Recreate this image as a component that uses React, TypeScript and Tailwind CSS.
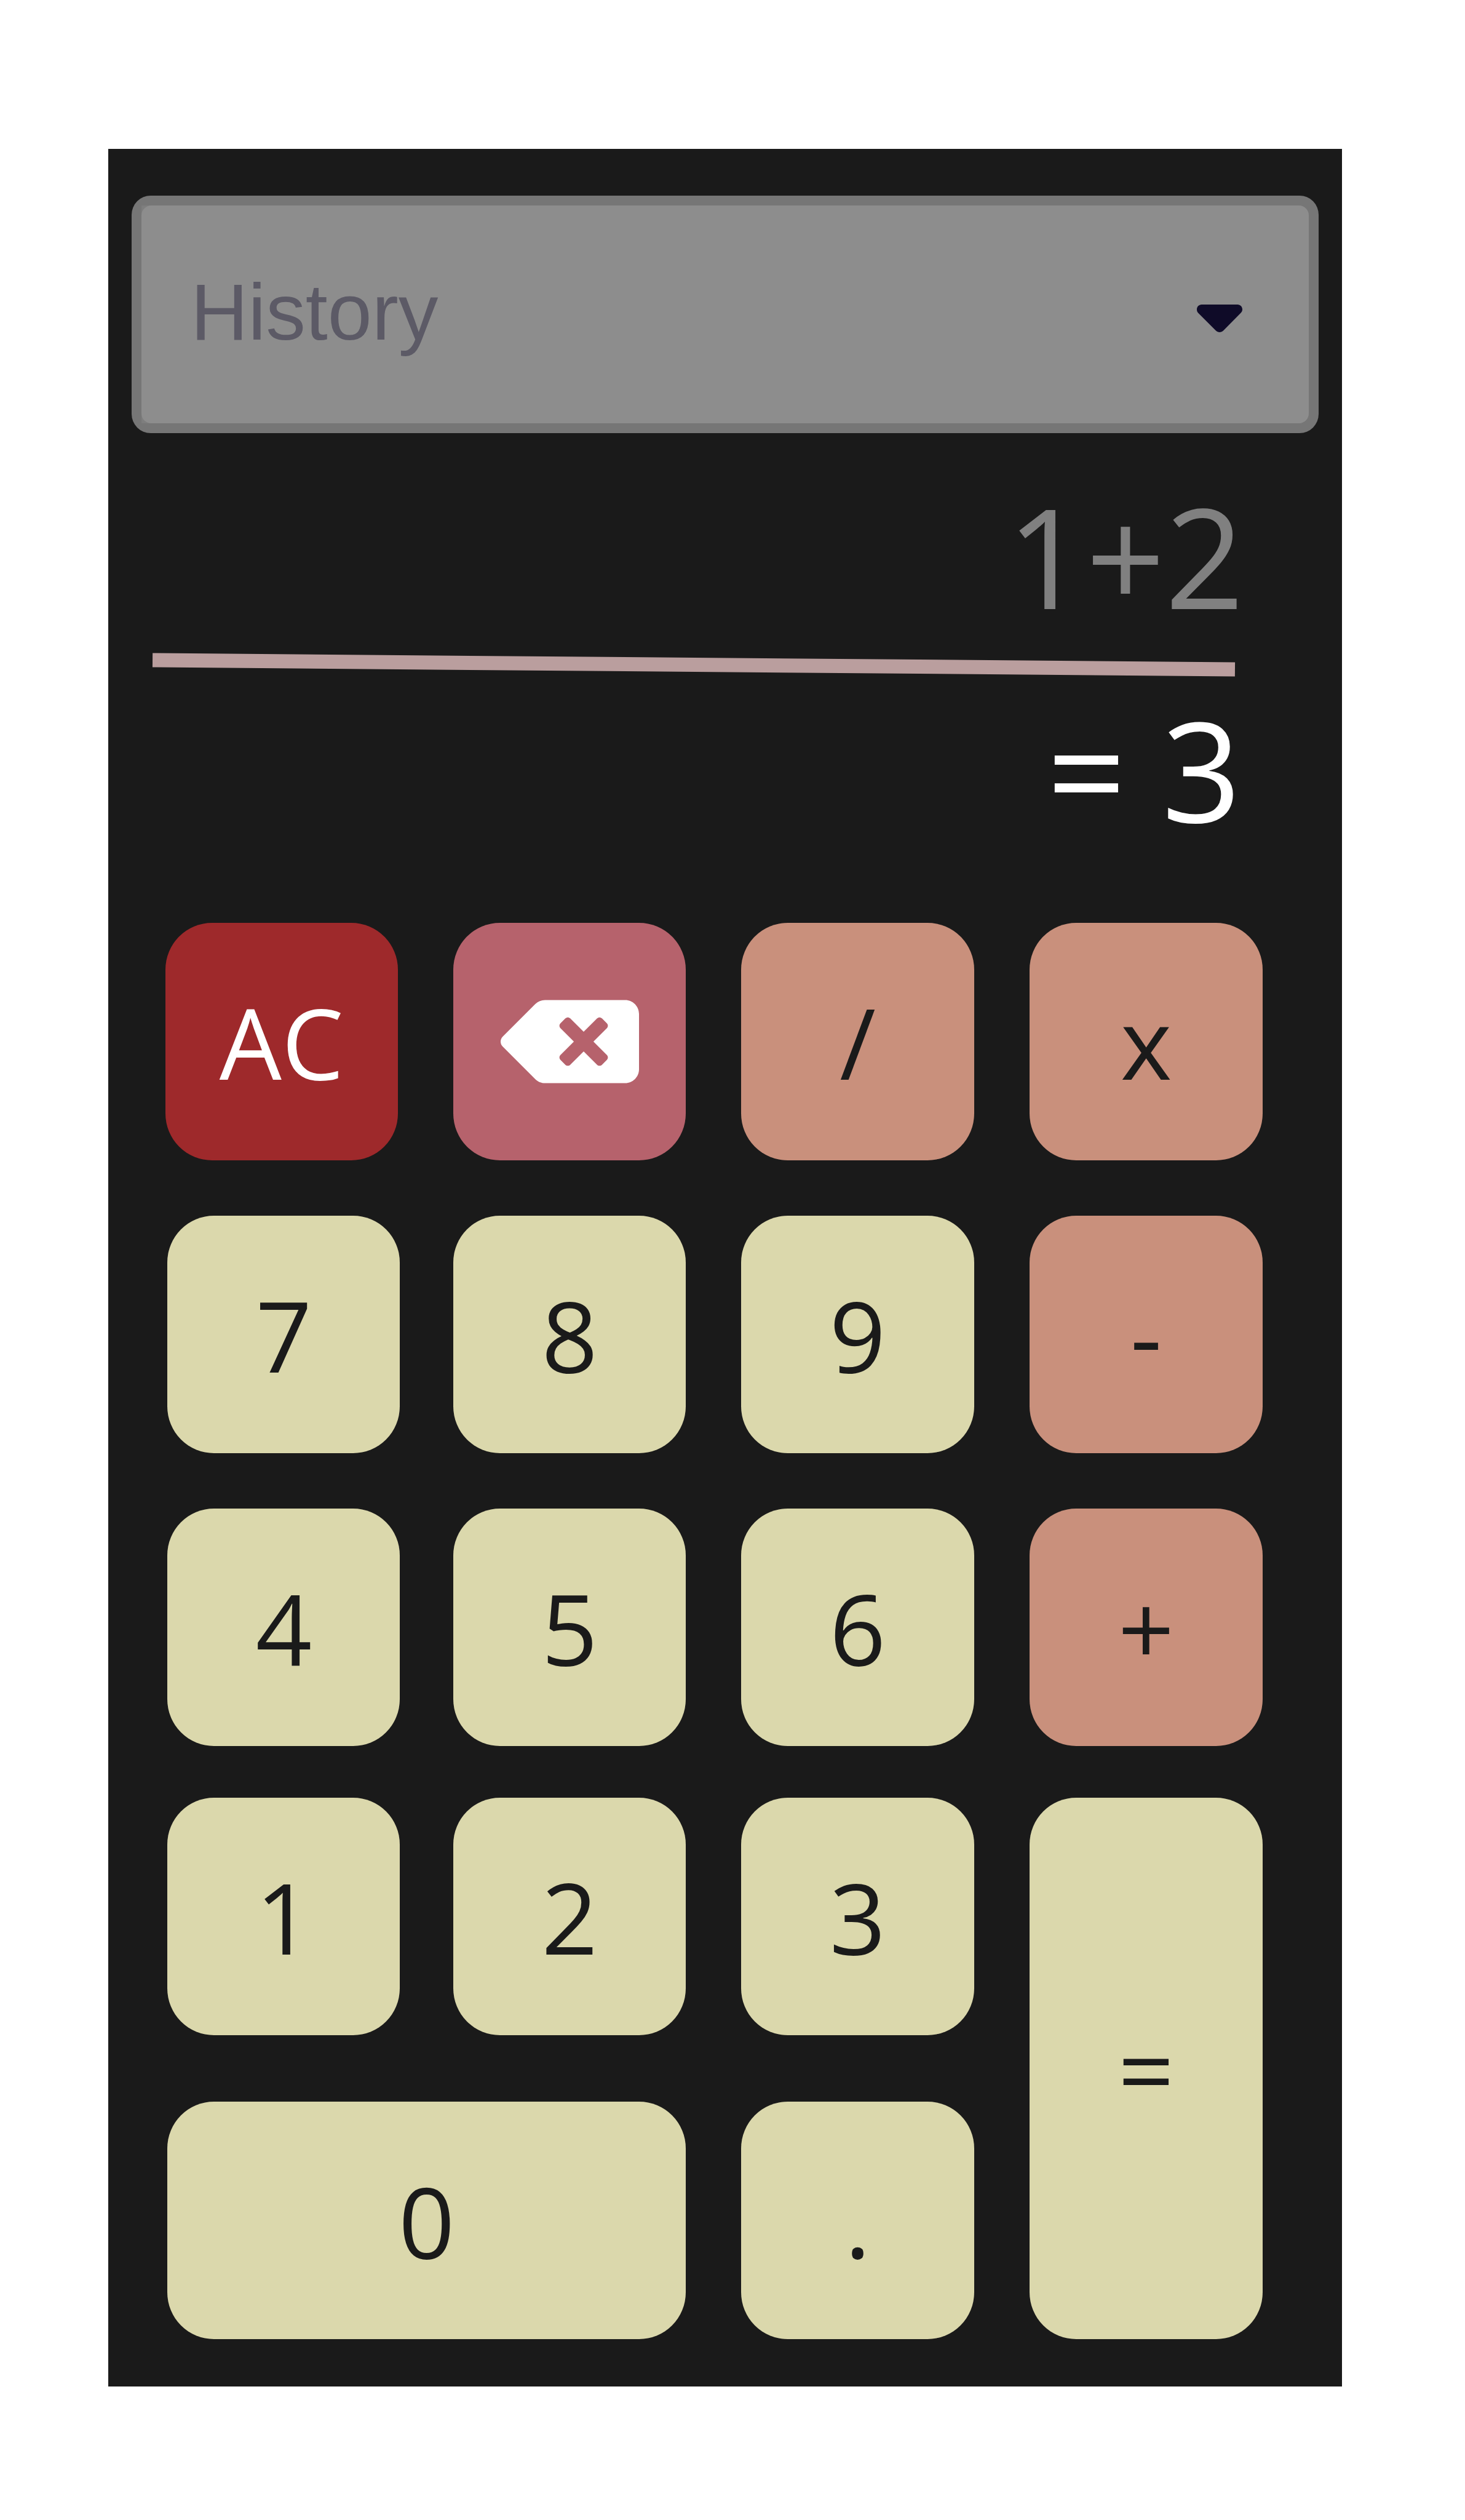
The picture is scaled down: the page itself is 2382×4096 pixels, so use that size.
import { FaBackspace } from "react-icons/fa";
import type { ReactNode } from "react";

const tones = {
  red: "bg-[#9e292b] text-white",
  rose: "bg-[#b6626c] text-white",
  clay: "bg-[#c9907c] text-[#1a1a1a]",
  cream: "bg-[#dbd8ac] text-[#1a1a1a]",
};

type KeyProps = {
  tone?: keyof typeof tones;
  size?: string;
  label?: string;
  children: ReactNode;
};

function Key({ tone = "cream", size = "w-[378.2px] h-[386px]", label, children }: KeyProps) {
  return (
    <button
      type="button"
      aria-label={label}
      className={`flex items-center justify-center rounded-[76px] text-[160px] leading-[218px] whitespace-nowrap ${size} ${tones[tone]}`}
    >
      {children}
    </button>
  );
}

function HistorySelect() {
  return (
    <div className="ml-[38px] h-[386px] w-[1930px] rounded-[31px] bg-[#767676] p-4">
      <div className="h-full rounded-r-[16px] bg-[#7e7e7e]">
        <div className="flex h-full items-center justify-between rounded-[16px] bg-[#8d8d8d] pr-[108px] pl-[80px]">
          <span className="mb-[9px] font-['Liberation_Sans',Arial,sans-serif] text-[129.4px] leading-[150px] text-[#5c5a66]">
            History
          </span>
          <svg viewBox="0 0 94.7 57.5" className="mt-[13px] h-[45px] w-[74px] fill-[#0f0b28]">
            <path d="M10 0H84.7C90.4 0 94.7 4.7 94.7 10.2C94.7 13 93.6 15.3 91.6 17.3L55 54.5C50.8 58.5 43.9 58.5 39.7 54.5L2.6 17.3C.8 15.3 0 13 0 10.2C0 4.7 4.3 0 10 0Z" />
          </svg>
        </div>
      </div>
    </div>
  );
}

export default function App() {
  return (
    <div className="h-[4096px] w-[2382px] overflow-hidden bg-white pt-[242px] pl-[176px] font-['Open_Sans','Noto_Sans',sans-serif]">
      <main className="flex h-[3637px] w-[2006px] flex-col bg-[#1a1a1a] pt-[76px]">
        <HistorySelect />

        <section className="mt-[46px] flex flex-col">
          <div className="h-[306px] pr-[159px] text-right text-[225px] leading-[306px] text-[#808080]">1+2</div>
          <div className="mt-[13px] ml-[72px] h-[23px] w-[1760px] rotate-[0.485deg] bg-[#ba9e9e]" />
          <div className="mt-[5px] h-[306px] pr-[164px] text-right text-[225px] leading-[306px] text-white">= 3</div>
        </section>

        <section className="mt-[97px] ml-[96.3px] grid grid-cols-[464.8px_468.3px_469.1px_378.2px] grid-rows-[476px_475.8px_470.7px_493.5px_386px]">
          <div className="-ml-[3.7px]">
            <Key tone="red">AC</Key>
          </div>
          <Key tone="rose" label="Backspace">
            <FaBackspace className="h-[180px] w-[225px]" />
          </Key>
          <Key tone="clay">/</Key>
          <Key tone="clay">x</Key>

          <Key>7</Key>
          <Key>8</Key>
          <Key>9</Key>
          <Key tone="clay">-</Key>

          <Key>4</Key>
          <Key>5</Key>
          <Key>6</Key>
          <Key tone="clay">+</Key>

          <Key>1</Key>
          <Key>2</Key>
          <Key>3</Key>
          <div className="row-span-2">
            <Key size="w-[378.2px] h-[879.5px]">=</Key>
          </div>

          <div className="col-span-2">
            <Key size="w-[843px] h-[386px]">0</Key>
          </div>
          <Key>.</Key>
        </section>
      </main>
    </div>
  );
}
